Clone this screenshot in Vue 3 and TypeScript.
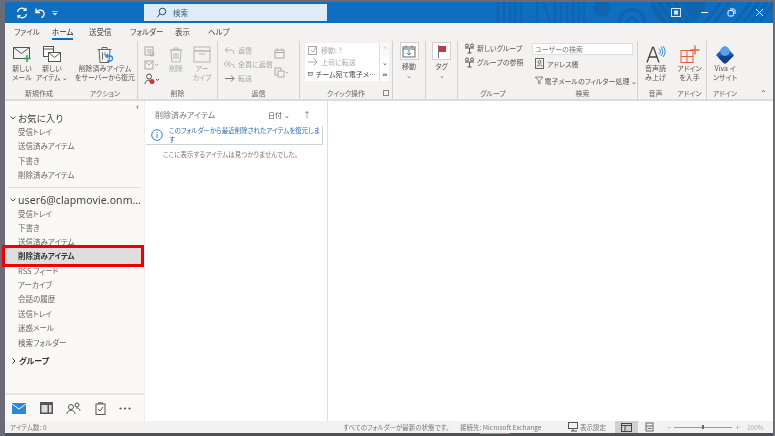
<template>
  <div class="frame">
    <div class="window">
      <header class="titlebar">
        <svg class="pattern" width="290" height="21" viewBox="0 0 290 21" fill="none">
          <path d="M15 0v21M21 0v21M27 0v21M32 0v21M38 0v21M54 0v21M60 0l8 21M72 0v21M78 0v21M84 0v21M90 0v21M96 0v21M101 0v21" stroke="#0f66b0" stroke-width="2.500" />
          <circle cx="119" cy="6" r="8.500" fill="#0f64ad" />
          <circle cx="149" cy="21" r="13" stroke="#0f64ad" stroke-width="3.500" />
          <circle cx="149" cy="21" r="5" stroke="#0f64ad" stroke-width="3" />
          <circle cx="195" cy="-3" r="28" fill="#0f64ad" />
          <path d="M172 0l14 21M180 0l14 21M188 0l14 21M196 0l14 21" stroke="#106ebe" stroke-width="2" />
          <path d="M222 21l16-21M231 21l16-21M252 21l16-21M260 21l16-21M268 21l16-21M276 21l16-21" stroke="#0f64ad" stroke-width="3" />
        </svg>
        <div class="quick">
          <svg width="12" height="12" viewBox="0 0 12 12" fill="none" stroke="#fff" stroke-width="1.200"><path d="M1.500 5a4.500 4.500 0 0 1 8-2M10.500 7a4.500 4.500 0 0 1-8 2" /><path d="M10 .8v2.600H7.400M2 11.200V8.600h2.600" /></svg>
          <svg width="12" height="12" viewBox="0 0 12 12" fill="none" stroke="#fff" stroke-width="1.300"><path d="M2 1.500v4h4" /><path d="M2.300 5.300C4 3 7 2.400 9 4c2 2 1.500 5-1.500 6.800" /></svg>
          <svg width="6" height="6" viewBox="0 0 6 6" fill="#cfe3f5"><path d="M0 1h6v.8H0zM.5 3h5L3 5.500z" /></svg>
        </div>
        <div class="searchbox">
          <svg width="11" height="11" viewBox="0 0 11 11" fill="none" stroke="#1f4e79" stroke-width="1"><circle cx="6.500" cy="4.500" r="3.300" /><path d="M4 7 1 10.200" /></svg>
          <span>検索</span>
        </div>
        <div class="winctl">
          <svg width="10" height="9" viewBox="0 0 10 9"><rect x=".5" y=".5" width="9" height="8" fill="none" stroke="#dbe9f6" /><rect x="3" y="2.500" width="4" height="4" fill="#dbe9f6" /></svg>
          <svg width="9" height="9" viewBox="0 0 9 9"><path d="M1 4.500h7" stroke="#fff" /></svg>
          <svg width="9" height="9" viewBox="0 0 9 9" fill="none" stroke="#fff"><rect x="1" y="2.500" width="5.500" height="5.500" rx="1.500" /><path d="M3 1h4a1.500 1.500 0 0 1 1 1v4" /></svg>
          <svg width="9" height="9" viewBox="0 0 9 9"><path d="M1 1l7 7M8 1 1 8" stroke="#fff" /></svg>
        </div>
      </header>

      <nav class="tabs">
        <span v-for="t in tabs" :key="t.label" class="tab" :class="{ active: t.active }" :style="{ width: t.width + 'px' }">{{ t.label }}</span>
      </nav>

      <section class="ribbon">
        <div class="group" style="width: 68px">
          <div class="group-body first">
            <div class="big w30">
              <svg width="20" height="17" viewBox="0 0 20 17" fill="none" stroke="#555"><rect x="1.500" y="1.500" width="16" height="11" /><path d="m1.500 1.500 8 6 8-6" /><path d="M15 9v7M11.500 12.500h7" stroke="#2e9e46" stroke-width="1.500" /></svg>
              <span>新しい<br />メール</span>
            </div>
            <div class="big w30">
              <svg width="20" height="17" viewBox="0 0 20 17" fill="none" stroke="#555"><rect x="1.500" y=".5" width="10" height="10" fill="#fff" /><path d="M1.500 3h10" /><rect x="6.500" y="6.500" width="12" height="9" fill="#fff" /><path d="m6.500 6.500 6 5 6-5" /></svg>
              <span>新しい<br />アイテム ⌄</span>
            </div>
          </div>
          <div class="group-label">新規作成</div>
        </div>
        <div class="group sep" style="width: 65px">
          <div class="group-body">
            <div class="big w65">
              <svg width="18" height="18" viewBox="0 0 18 18" fill="none" stroke="#666"><path d="M3 4h11l-1 13H4zM6 4V2h5v2M1.500 4h14M6.500 7v7M9 7v3" /><path d="M10 10.500h4a2.500 2.500 0 0 1 0 5h-3M12 8.500l-2.300 2 2.300 2" stroke="#2b88d8" stroke-width="1.300" /></svg>
              <span>削除済みアイテム<br />をサーバーから復元</span>
            </div>
          </div>
          <div class="group-label">アクション</div>
        </div>
        <div class="group sep" style="width: 80px">
          <div class="group-body pl5">
            <div class="icon-col">
              <svg width="11" height="11" viewBox="0 0 11 11" fill="none" stroke="#aaa"><rect x="1" y="1" width="8" height="8" /><path d="M3 4h5M3 6h3" /><circle cx="8" cy="8" r="2" /></svg>
              <svg width="14" height="10" viewBox="0 0 14 10" fill="none" stroke="#aaa"><rect x="1" y="1" width="8" height="8" /><path d="m1 1 4 4 4-4M11 4l1.500 1.500L14 4" /></svg>
              <svg width="16" height="12" viewBox="0 0 16 12" fill="none"><circle cx="5" cy="3.500" r="2.500" stroke="#555" /><path d="M1 11c0-5 7-5 8 0" stroke="#555" /><circle cx="8" cy="8.500" r="2.500" fill="#d13438" /><path d="M12 6l1.500 1.500L15 6" stroke="#555" /></svg>
            </div>
            <div class="big w26 dim">
              <svg width="14" height="17" viewBox="0 0 14 17" fill="none" stroke="#b5b5b5"><path d="M2 4h10l-.8 12H2.800zM5 4V2h4v2M.5 4h13M5 7v6M7 7v6M9 7v6" /></svg>
              <span>削除</span>
            </div>
            <div class="big w26 dim">
              <svg width="18" height="17" viewBox="0 0 18 17" fill="none" stroke="#b5b5b5"><rect x="1" y="1" width="16" height="4" /><rect x="1" y="5" width="16" height="11" /><path d="M6 8h6" /></svg>
              <span>アー<br />カイブ</span>
            </div>
          </div>
          <div class="group-label">削除</div>
        </div>
        <div class="group sep" style="width: 82px">
          <div class="group-body pl6">
            <div class="small-col dim">
              <div class="small"><svg width="11" height="9" viewBox="0 0 11 9" fill="none" stroke="#b5b5b5"><path d="M4 1 1 4l3 3M1 4h6a3 3 0 0 1 3 3v1" /></svg><span>返信</span></div>
              <div class="small"><svg width="11" height="9" viewBox="0 0 11 9" fill="none" stroke="#b5b5b5"><path d="M3 1 0 4l3 3M6 1 3 4l3 3M3 4h4a3 3 0 0 1 3 3v1" /></svg><span>全員に返信</span></div>
              <div class="small"><svg width="11" height="9" viewBox="0 0 11 9" fill="none" stroke="#777"><path d="M1 4.500h9M7 1.500l3 3-3 3" /></svg><span>転送</span></div>
            </div>
            <div class="icon-col right">
              <svg width="11" height="11" viewBox="0 0 11 11" fill="none" stroke="#aaa"><rect x="1" y="2" width="9" height="8" /><path d="M1 4.500h9M3.500 .5v2M7.500 .5v2" /></svg>
              <svg width="15" height="11" viewBox="0 0 15 11" fill="none" stroke="#aaa"><rect x="1" y="1" width="6" height="7" /><rect x="4" y="4" width="6" height="6" fill="#f3f2f1" /><path d="m12 5 1.200 1.200L14.500 5" /></svg>
            </div>
          </div>
          <div class="group-label">返信</div>
        </div>
        <div class="group sep" style="width: 93px">
          <div class="group-body pl5">
            <div class="gallery">
              <div class="gallery-list">
                <div class="quickstep dim"><svg width="10" height="10" viewBox="0 0 10 10" fill="none" stroke="#aaa"><rect x=".5" y="1.500" width="8" height="8" /><path d="m3 5 2 2 3-5" /></svg><span>移動: ?</span></div>
                <div class="quickstep dim"><svg width="10" height="10" viewBox="0 0 10 10" fill="none" stroke="#aaa"><path d="M0 5h9M5.500 1.500 9 5 5.500 8.500" /></svg><span>上司に転送</span></div>
                <div class="quickstep"><svg width="10" height="8" viewBox="0 0 10 8" fill="none" stroke="#444"><rect x=".5" y=".5" width="9" height="7" /><path d="m.5.5 4.500 4 4.500-4" /></svg><span>チーム宛て電子メ…</span></div>
              </div>
              <div class="gallery-arrows">
                <i>⌃</i><i class="on">⌄</i><i class="on">≂</i>
              </div>
            </div>
          </div>
          <div class="group-label">クイック操作<span class="launcher" /></div>
        </div>
        <div class="group sep" style="width: 33px">
          <div class="group-body center">
            <div class="boxed">
              <div class="box"><svg width="14" height="13" viewBox="0 0 14 13" fill="none" stroke="#666"><rect x="1" y="2" width="12" height="10" /><path d="M1 4h12M4 .5v2M10 .5v2" /><path d="M7 5v5M5 8l2 2 2-2" stroke="#2b88d8" /></svg></div>
              <span>移動</span>
              <span class="chev">⌄</span>
            </div>
          </div>
        </div>
        <div class="group sep" style="width: 32px">
          <div class="group-body center">
            <div class="boxed">
              <div class="box"><svg width="10" height="13" viewBox="0 0 10 13"><path d="M1 0h1v13H1z" fill="#777" /><path d="M2 1h7v6H2z" fill="#d13438" /></svg></div>
              <span>タグ</span>
              <span class="chev">⌄</span>
            </div>
          </div>
        </div>
        <div class="group" style="width: 70px">
          <div class="group-body pl6">
            <div class="small-col two">
              <div class="small"><svg width="11" height="11" viewBox="0 0 11 11" fill="none" stroke="#555"><circle cx="3" cy="2.500" r="1.500" /><circle cx="8" cy="2.500" r="1.500" /><path d="M1 5h9M5.500 5v5M3.500 10h4" /></svg><span>新しいグループ</span></div>
              <div class="small"><svg width="11" height="11" viewBox="0 0 11 11" fill="none" stroke="#555"><circle cx="3" cy="2.500" r="1.500" /><circle cx="8" cy="2.500" r="1.500" /><path d="M1 5h9M5.500 5v5M3.500 10h4" /></svg><span>グループの参照</span></div>
            </div>
          </div>
          <div class="group-label">グループ</div>
        </div>
        <div class="group sep" style="width: 110px">
          <div class="group-body search-body">
            <div class="people">ユーザーの検索</div>
            <div class="small"><svg width="9" height="11" viewBox="0 0 9 11" fill="none" stroke="#666"><rect x=".5" y=".5" width="8" height="10" /><circle cx="4.500" cy="4" r="1.500" /><path d="M2 8.500c0-2 5-2 5 0" /></svg><span>アドレス帳</span></div>
            <div class="small"><svg width="11" height="11" viewBox="0 0 11 11" fill="none" stroke="#666"><path d="M.5 1h10L6.500 5.500V10l-2-1V5.500z" /></svg><span>電子メールのフィルター処理 ⌄</span></div>
          </div>
          <div class="group-label">検索</div>
        </div>
        <div class="group" style="width: 35px">
          <div class="group-body">
            <div class="big w35">
              <svg width="20" height="18" viewBox="0 0 20 18" fill="none"><path d="M1 17 6.500 2h1L13 17M3.200 11.500h8" stroke="#444" stroke-width="1.300" /><path d="M13 3a4 4 0 0 1 0 6M15 1.500a7 7 0 0 1 0 9M17 .5a9 9 0 0 1 0 11" stroke="#2b88d8" /></svg>
              <span>音声読<br />み上げ</span>
            </div>
          </div>
          <div class="group-label">音声</div>
        </div>
        <div class="group sep" style="width: 34px">
          <div class="group-body">
            <div class="big w34">
              <svg width="20" height="18" viewBox="0 0 20 18" fill="none" stroke="#d8603a"><rect x="1" y="5" width="12" height="12" fill="#fdf1ec" /><path d="M7 5v12M1 11h12" /><path d="M15 0v9M10.500 4.500h9" stroke-width="1.300" /></svg>
              <span>アドイン<br />を入手</span>
            </div>
          </div>
          <div class="group-label">アドイン</div>
        </div>
        <div class="group last">
          <div class="group-body">
            <div class="big w36">
              <svg width="20" height="20" viewBox="0 0 20 20"><path d="M10 1 19.500 10.500 12 18.500a3 3 0 0 1-4 0L.5 10.500z" fill="#1c5fb5" /><path d="M6 11h13.500L12 18.500a3 3 0 0 1-4 0L3 13z" fill="#123f8c" /><circle cx="10" cy="6.500" r="5" fill="#5aa0ea" /></svg>
              <span>Viva イ<br />ンサイト</span>
            </div>
          </div>
          <div class="group-label label-viva">アドイン<span class="collapse">⌃</span></div>
        </div>
      </section>

      <main class="body">
        <aside class="sidebar">
          <div class="folders">
            <div class="pin">‹</div>
            <div class="heading">
              <svg class="caret" width="6" height="4" viewBox="0 0 6 4" fill="none" stroke="#555"><path d="m.5.5 2.500 2.500 2.500-2.500" /></svg>お気に入り
            </div>
            <div v-for="f in favorites" :key="f" class="folder">{{ f }}</div>
            <div class="rule" />
            <div class="heading account">
              <svg class="caret" width="6" height="4" viewBox="0 0 6 4" fill="none" stroke="#555"><path d="m.5.5 2.500 2.500 2.500-2.500" /></svg>user6@clapmovie.onm…
            </div>
            <div v-for="f in mailbox" :key="f" class="folder" :class="{ selected: f === selected }">{{ f }}</div>
            <div class="heading group-head">
              <svg class="caret right-caret" width="4" height="6" viewBox="0 0 4 6" fill="none" stroke="#333"><path d="m.5.5 2.500 2.500-2.500 2.500" /></svg><b>グループ</b>
            </div>
          </div>
          <div class="navbar">
            <svg width="14" height="11" viewBox="0 0 14 11"><rect width="14" height="11" fill="#2b88d8" /><path d="m0 1 7 5 7-5" fill="none" stroke="#fff" /></svg>
            <svg width="13" height="12" viewBox="0 0 13 12"><rect width="13" height="12" fill="#555" /><rect x="1.500" y="3" width="6" height="7.500" fill="#ddd" /><rect x="9" y="3" width="2.500" height="7.500" fill="#ddd" /></svg>
            <svg width="15" height="12" viewBox="0 0 15 12" fill="none" stroke="#555"><circle cx="5" cy="5" r="2.500" /><path d="M1 12c0-5 8-5 8 0" /><circle cx="11" cy="3" r="2" /><path d="M10 6c2-.5 4 1 4 3" /></svg>
            <svg width="11" height="13" viewBox="0 0 11 13" fill="none" stroke="#555"><rect x="1" y="2" width="9" height="10.500" /><path d="M3.500 2V.8h4V2M3 7l2 2 3-4" /></svg>
            <svg width="12" height="3" viewBox="0 0 12 3" fill="#555"><circle cx="1.500" cy="1.500" r="1.100" /><circle cx="6" cy="1.500" r="1.100" /><circle cx="10.500" cy="1.500" r="1.100" /></svg>
          </div>
        </aside>

        <section class="listpane">
          <div class="listhead">
            <span class="listtitle">削除済みアイテム</span>
            <span class="sort">日付 ⌄</span>
            <span class="arrow">↑</span>
          </div>
          <div class="infobar">
            <svg width="12" height="12" viewBox="0 0 12 12" fill="none" stroke="#2b88d8"><circle cx="6" cy="6" r="5.300" /><path d="M6 5v4M6 3v1.100" /></svg>
            <p>このフォルダーから最近削除されたアイテムを復元します</p>
          </div>
          <p class="empty">ここに表示するアイテムは見つかりませんでした。</p>
        </section>
        <section class="reading" />
      </main>

      <footer class="statusbar">
        <span class="count">アイテム数: 0</span>
        <span class="filter">すべてのフォルダーが最新の状態です。</span>
        <span class="conn">接続先: Microsoft Exchange</span>
        <svg class="disp-icon" width="11" height="10" viewBox="0 0 11 10" fill="none" stroke="#555"><rect x=".5" y=".5" width="9" height="6" /><path d="M3 9h6M5 7v2" /></svg>
        <span class="disp">表示設定</span>
        <span class="view on"><svg width="11" height="9" viewBox="0 0 11 9" fill="none" stroke="#444"><rect x=".5" y=".5" width="10" height="8" /><path d="M.5 2.500h10M4 2.500v6" /></svg></span>
        <span class="view"><svg width="9" height="10" viewBox="0 0 9 10" fill="none" stroke="#666"><rect x="1" y="1" width="7" height="8" /><path d="M1 4h7M2.500 6.500h4" /></svg></span>
        <span class="zoomer"><i>−</i><span class="track"><span class="thumb" /></span><i>+</i></span>
        <span class="pct">100%</span>
      </footer>
    </div>
  </div>
</template>

<script setup lang="ts">
interface Tab {
  label: string
  width: number
  active?: boolean
}

const tabs: Tab[] = [
  { label: 'ファイル', width: 38 },
  { label: 'ホーム', width: 37, active: true },
  { label: '送受信', width: 41 },
  { label: 'フォルダー', width: 45 },
  { label: '表示', width: 33 },
  { label: 'ヘルプ', width: 40 }
]

const favorites = ['受信トレイ', '送信済みアイテム', '下書き', '削除済みアイテム']
const mailbox = ['受信トレイ', '下書き', '送信済みアイテム', '削除済みアイテム', 'RSS フィード', 'アーカイブ', '会話の履歴', '送信トレイ', '迷惑メール', '検索フォルダー']
const selected = '削除済みアイテム'
</script>

<style>
html, body {
  margin: 0;
  background: #6b6b78;
}
</style>

<style scoped>
.frame {
  width: 775px;
  height: 436px;
  box-sizing: border-box;
  padding: 2px 2px 3px 5px;
  background: #6b6b78;
  font-family: "Noto Sans CJK JP", "Noto Sans", sans-serif;
  font-feature-settings: "palt";
  font-size: 7px;
  line-height: 10px;
  color: #555;
  overflow: hidden;
  filter: blur(0.3px);
}
.window {
  height: 100%;
  display: flex;
  flex-direction: column;
  background: #fff;
  box-shadow: 0 3px 0 #50505a;
}
.titlebar {
  position: relative;
  height: 21px;
  flex: none;
  display: flex;
  align-items: center;
  background: #106ebe;
}
.pattern {
  position: absolute;
  right: 0;
  top: 0;
}
.quick {
  width: 139px;
  flex: none;
  box-sizing: border-box;
  padding-left: 11px;
  display: flex;
  align-items: center;
  gap: 6px;
}
.searchbox {
  position: relative;
  width: 183px;
  height: 17px;
  display: flex;
  align-items: center;
  gap: 6px;
  padding-left: 12px;
  box-sizing: border-box;
  background: #deecf9;
  color: #44607a;
  font-size: 7.500px;
}
.winctl {
  position: relative;
  margin-left: auto;
  width: 102px;
  display: flex;
  justify-content: space-between;
  padding-right: 9px;
  box-sizing: border-box;
}
.tabs {
  height: 18px;
  flex: none;
  display: flex;
  padding-left: 9px;
  background: #f3f2f1;
  color: #444;
}
.tab {
  box-sizing: border-box;
  padding-top: 4px;
  font-size: 7.500px;
}
.tab.active {
  position: relative;
  color: #222;
}
.tab.active::after {
  content: "";
  position: absolute;
  left: 0;
  top: 15px;
  width: 21px;
  height: 1.500px;
  background: #106ebe;
}
.ribbon {
  height: 58px;
  flex: none;
  display: flex;
  background: #f3f2f1;
  border-bottom: 2px solid #dedcda;
}
.group {
  display: flex;
  flex-direction: column;
  box-sizing: border-box;
  flex: none;
}
.group.sep {
  border-right: 1px solid #d2d0ce;
}
.group.last {
  flex: 1;
  position: relative;
}
.group-body {
  flex: 1;
  display: flex;
  min-height: 0;
}
.group-body.first { padding-left: 2px; }
.group-label {
  position: relative;
  height: 11px;
  line-height: 10px;
  text-align: center;
  font-size: 7px;
  color: #666;
  flex: none;
}
.label-viva {
  width: 36px;
  position: static;
}
.pl5 { padding-left: 5px; }
.pl6 { padding-left: 6px; }
.center { justify-content: center; }
.big {
  display: flex;
  flex-direction: column;
  align-items: center;
  text-align: center;
  padding-top: 4px;
  font-size: 7px;
  line-height: 9px;
  color: #555;
  white-space: nowrap;
}
.big svg { height: 19px; flex: none; }
.w30 { width: 30px; }
.w65 { width: 65px; }
.w26 { width: 26px; }
.w35 { width: 35px; }
.w34 { width: 34px; }
.w36 { width: 36px; }
.dim { color: #a8a8a8; }
.icon-col {
  width: 20px;
  display: flex;
  flex-direction: column;
  gap: 3px;
  padding-top: 5px;
  padding-left: 1px;
  box-sizing: border-box;
}
.icon-col.right {
  width: 18px;
  gap: 8px;
  padding-top: 7px;
  margin-left: auto;
  margin-right: 10px;
}
.small-col {
  display: flex;
  flex-direction: column;
  padding-top: 4px;
  gap: 4px;
}
.small-col.two { gap: 4px; padding-top: 2px; }
.small {
  display: flex;
  align-items: center;
  gap: 2px;
  height: 10px;
  font-size: 7px;
  white-space: nowrap;
}
.small-col.dim .small { gap: 3px; }
.gallery {
  display: flex;
  margin-top: 2px;
  height: 38px;
}
.gallery-list {
  width: 74px;
  background: #fff;
  box-sizing: border-box;
  padding: 1px 3px;
}
.quickstep {
  display: flex;
  align-items: center;
  gap: 3px;
  height: 12px;
  font-size: 7px;
  white-space: nowrap;
  color: #444;
}
.quickstep.dim { color: #aaa; }
.gallery-arrows {
  width: 9px;
  display: flex;
  flex-direction: column;
  border-left: 1px solid #e1dfdd;
  background: #faf9f8;
}
.gallery-arrows i {
  height: 12.600px;
  line-height: 12px;
  text-align: center;
  font-style: normal;
  font-size: 7px;
  color: #bbb;
}
.gallery-arrows i.on { color: #444; background: #fff; }
.launcher {
  position: absolute;
  right: 3px;
  top: 2px;
  width: 4px;
  height: 4px;
  border: 1px solid #888;
}
.boxed {
  display: flex;
  flex-direction: column;
  align-items: center;
  padding-top: 1px;
  font-size: 7px;
  line-height: 9px;
}
.box {
  width: 19px;
  height: 18px;
  box-sizing: border-box;
  border: 1px solid #d2d0ce;
  background: #fff;
  display: flex;
  align-items: center;
  justify-content: center;
  margin-bottom: 2px;
}
.chev {
  font-size: 7px;
  color: #777;
}
.search-body {
  flex-direction: column;
  padding-left: 4px;
  gap: 3px;
  padding-top: 2px;
}
.people {
  width: 101px;
  height: 12px;
  box-sizing: border-box;
  padding-left: 2px;
  background: #fff;
  border: 1px solid #e1dfdd;
  font-size: 7px;
  line-height: 10px;
  color: #777;
}
.search-body .small { gap: 3px; height: 11px; margin-left: 3px; }
.search-body .small:last-child { margin-top: 3px; gap: 1px; }
.collapse {
  position: absolute;
  right: 6px;
  bottom: 1px;
  font-size: 8px;
  color: #555;
}
.body {
  flex: 1;
  display: flex;
  min-height: 0;
}
.sidebar {
  width: 139px;
  flex: none;
  display: flex;
  flex-direction: column;
  background: #faf9f8;
}
.folders {
  flex: 1;
  position: relative;
  padding-top: 9px;
}
.pin {
  position: absolute;
  right: 5px;
  top: 1px;
  font-size: 9px;
  line-height: 9px;
  color: #444;
}
.heading {
  height: 15px;
  display: flex;
  align-items: center;
  font-size: 9.500px;
  color: #444;
  white-space: nowrap;
}
.caret {
  flex: none;
  margin: 0 2px 0 5px;
}
.right-caret {
  margin: 0 3px 0 7px;
}
.account {
  height: 14px;
  font-family: "Noto Sans", sans-serif;
  font-size: 10.500px;
  letter-spacing: 0.1px;
}
.group-head {
  height: 14px;
  margin-top: 4px;
  font-size: 8px;
  color: #333;
}
.folder {
  height: 14.400px;
  line-height: 14.400px;
  padding-left: 13px;
  font-size: 7.500px;
  color: #666;
  white-space: nowrap;
}
.folder.selected {
  position: relative;
  height: 16px;
  line-height: 16px;
  margin: -2.200px 3px 0 0;
  background: #dedede;
  outline: 3px solid #f00000;
  font-weight: 700;
  color: #333;
}
.rule {
  height: 1px;
  margin: 4px 3px 5px 3px;
  background: #e1dfdd;
}
.navbar {
  height: 28px;
  flex: none;
  display: flex;
  align-items: center;
  box-sizing: border-box;
  border-top: 2px solid #e8e6e4;
  padding-left: 7px;
  gap: 13.500px;
}
.listpane {
  width: 184px;
  flex: none;
  box-sizing: border-box;
  border-right: 1px solid #e1dfdd;
  border-left: 1px solid #eee;
}
.listhead {
  height: 25px;
  box-sizing: border-box;
  padding: 9px 0 0 10px;
  display: flex;
  font-size: 8px;
  color: #777;
}
.listtitle { width: 113px; }
.sort { width: 35px; font-size: 7px; color: #555; }
.arrow { color: #777; }
.infobar {
  margin-left: 1px;
  width: 177px;
  height: 19px;
  box-sizing: border-box;
  padding-left: 5px;
  display: flex;
  align-items: center;
  gap: 6px;
  border-right: 1px solid #c8d4de;
  border-bottom: 1px solid #c8d4de;
}
.infobar svg { flex: none; }
.infobar p {
  margin: 0;
  font-size: 6.500px;
  line-height: 9px;
  color: #2b6ca8;
}
.empty {
  margin: 4px 0 0 18px;
  font-size: 6.500px;
  line-height: 10px;
  color: #777;
  white-space: nowrap;
}
.reading {
  flex: 1;
  background: #fff;
}
.statusbar {
  position: relative;
  height: 12px;
  flex: none;
  display: flex;
  align-items: center;
  background: #f3f2f1;
  font-size: 6.500px;
  color: #777;
}
.statusbar::after {
  content: "";
  position: absolute;
  left: 475px;
  top: 12px;
  width: 30px;
  height: 1px;
  background: #e07b39;
}
.count { width: 338px; padding-left: 5px; box-sizing: border-box; }
.filter { width: 117px; white-space: nowrap; }
.conn { width: 108px; white-space: nowrap; }
.disp-icon { flex: none; margin-right: 1px; }
.disp { width: 35px; white-space: nowrap; }
.view {
  width: 23px;
  height: 12px;
  display: flex;
  align-items: center;
  justify-content: center;
}
.view.on { background: #d2d0ce; }
.zoomer {
  margin-left: 6px;
  width: 76px;
  display: flex;
  align-items: center;
  gap: 3px;
  color: #aaa;
}
.zoomer i { font-style: normal; font-size: 8px; }
.track {
  position: relative;
  width: 58px;
  height: 1px;
  background: #999;
}
.thumb {
  position: absolute;
  left: 28px;
  top: -1.500px;
  width: 2px;
  height: 4px;
  background: #666;
}
.pct {
  margin-left: 4px;
  color: #aaa;
}
</style>
